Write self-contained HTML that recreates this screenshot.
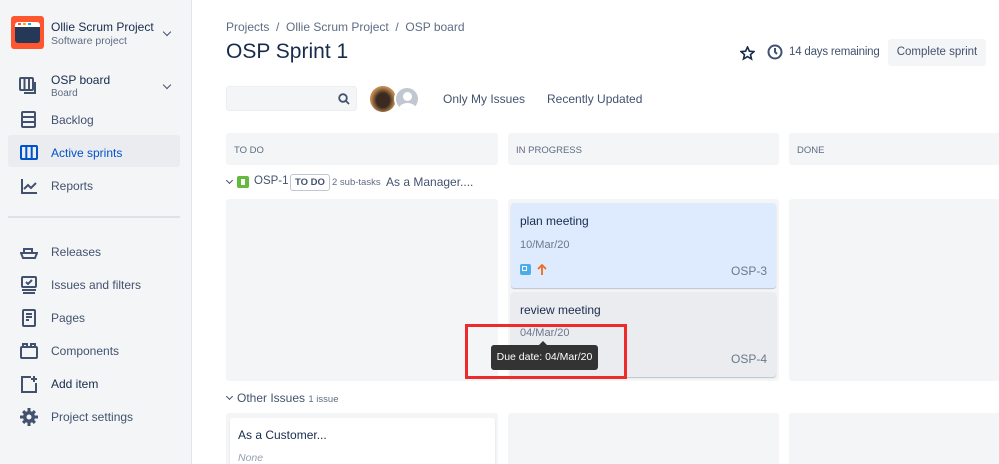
<!DOCTYPE html>
<html><head><meta charset="utf-8"><style>
*{margin:0;padding:0;box-sizing:border-box}
html,body{width:999px;height:464px;overflow:hidden}
body{background:#fff;font-family:"Liberation Sans",sans-serif;color:#172b4d;position:relative}
.a{position:absolute}
.side{left:0;top:0;width:192px;height:464px;background:#f4f5f7;border-right:1px solid #e2e4e8}
.nav{left:20px;font-size:12px;color:#42526e}
.nav svg{position:absolute;left:0;top:0}
.nav span{position:absolute;left:31px;top:2px;white-space:nowrap}
.col{background:#f4f5f7;border-radius:3px}
.hd{font-size:9.5px;color:#5e6c84;padding:12px 8px}
.t{white-space:nowrap}
.chev{width:6px;height:6px;border-right:1.8px solid #42526e;border-bottom:1.8px solid #42526e;transform:rotate(45deg)}
</style></head><body>
<div class="a side"></div>
<div class="a" style="left:11px;top:16px;width:33px;height:33px;background:#ff5630;border-radius:3px"></div>
<div class="a" style="left:15px;top:22px;width:25px;height:21px;background:#253858;border-radius:3px"></div>
<div class="a" style="left:15px;top:22px;width:25px;height:5px;background:#fff;border-radius:3px 3px 0 0"></div>
<div class="a" style="left:18px;top:23px;width:3px;height:2px;background:#ff5630"></div>
<div class="a" style="left:23px;top:23px;width:3px;height:2px;background:#ffab00"></div>
<div class="a" style="left:28px;top:23px;width:3px;height:2px;background:#00b8d9"></div>
<div class="a t" style="left:51px;top:20px;font-size:12px;color:#172b4d">Ollie Scrum Project</div>
<div class="a t" style="left:51px;top:35px;font-size:10.5px;color:#5e6c84">Software project</div>
<div class="a chev" style="left:164px;top:29px"></div>
<div class="a chev" style="left:164px;top:82px"></div>
<div class="a" style="left:8px;top:135px;width:172px;height:32px;background:#ebecf0;border-radius:3px"></div>
<div class="a t" style="left:51px;top:73px;font-size:12px;color:#172b4d">OSP board</div>
<div class="a t" style="left:51px;top:88px;font-size:10px;color:#5e6c84">Board</div>
<svg class="a" style="left:19px;top:77px" width="18" height="18" fill="none" stroke="#42526e" stroke-width="2"><rect x="1" y="1" width="13" height="12" rx="1"/><path d="M5.5 1v12M10 1v12M16 5v11H5"/></svg>
<div class="a nav" style="top:111px"><svg width="18" height="18" fill="none" stroke="#42526e" stroke-width="2"><rect x="2" y="1" width="13" height="5" rx="1"/><rect x="2" y="6" width="13" height="5" rx="1"/><rect x="2" y="11" width="13" height="5" rx="1"/></svg><span>Backlog</span></div>
<div class="a nav" style="top:144px;color:#0052cc"><svg width="18" height="18" fill="none" stroke="#0052cc" stroke-width="2"><rect x="1" y="2" width="16" height="13" rx="1"/><path d="M6.3 2v13M11.7 2v13"/></svg><span>Active sprints</span></div>
<div class="a nav" style="top:177px"><svg width="18" height="18" fill="none" stroke="#42526e" stroke-width="2"><path d="M2 2v14h15M4 12l4-4 3 3 5-5"/></svg><span>Reports</span></div>
<div class="a" style="left:8px;top:216px;width:172px;height:2px;background:#dfe1e6"></div>
<div class="a nav" style="top:243px"><svg width="18" height="18" fill="none" stroke="#42526e" stroke-width="2"><path d="M1 10h16l-2 5H3zM4 10V6h8v4"/></svg><span>Releases</span></div>
<div class="a nav" style="top:276px"><svg width="18" height="18" fill="none" stroke="#42526e" stroke-width="2"><rect x="2" y="1" width="14" height="10" rx="1"/><path d="M2 14h14M3 17h12M6 6l2 2 4-4"/></svg><span>Issues and filters</span></div>
<div class="a nav" style="top:309px"><svg width="18" height="18" fill="none" stroke="#42526e" stroke-width="2"><rect x="3" y="1" width="12" height="16" rx="1"/><path d="M6 5h6M6 8h6M6 11h3"/></svg><span>Pages</span></div>
<div class="a nav" style="top:342px"><svg width="18" height="18" fill="none" stroke="#42526e" stroke-width="2"><rect x="1" y="5" width="16" height="11" rx="1"/><path d="M3 5V2h4v3M11 5V2h4v3"/></svg><span>Components</span></div>
<div class="a nav" style="top:375px;color:#172b4d"><svg width="18" height="18" fill="none" stroke="#42526e" stroke-width="2"><path d="M11 2H2v15h14V8M14 1v6M11 4h6"/></svg><span>Add item</span></div>
<div class="a nav" style="top:408px"><svg width="18" height="18" fill="#42526e"><circle cx="9" cy="9" r="6"/><path d="M7.5 0h3v18h-3zM0 7.5h18v3H0z"/><path d="M2 4.2L4.2 2 16 13.8 13.8 16zM13.8 2L16 4.2 4.2 16 2 13.8z"/><circle cx="9" cy="9" r="2.5" fill="#f4f5f7"/></svg><span>Project settings</span></div>

<div class="a t" style="left:226px;top:20px;font-size:12px;color:#5e6c84">Projects &nbsp;/&nbsp; Ollie Scrum Project &nbsp;/&nbsp; OSP board</div>
<div class="a t" style="left:226px;top:40px;font-size:21px;color:#172b4d">OSP Sprint 1</div>
<svg class="a" style="left:740px;top:46px" width="15" height="15" fill="none" stroke="#172b4d" stroke-width="1.6"><path d="M7.5 1l1.9 4.2 4.5.4-3.4 3 1 4.4-4-2.4-4 2.4 1-4.4-3.4-3 4.5-.4z"/></svg>
<svg class="a" style="left:767px;top:44px" width="16" height="16" fill="none" stroke="#42526e" stroke-width="2"><circle cx="8" cy="8" r="6.5"/><path d="M8 4v4l2 2"/></svg>
<div class="a t" style="left:789px;top:46px;font-size:11.5px;color:#42526e;letter-spacing:-0.2px">14 days remaining</div>
<div class="a t" style="left:888px;top:39px;width:98px;height:27px;background:#f4f5f7;border-radius:3px;font-size:11.5px;color:#42526e;text-align:center;line-height:27px">Complete sprint</div>
<div class="a" style="left:226px;top:86px;width:131px;height:25px;background:#f4f5f7;border:1px solid #eceef1;border-radius:3px"></div>
<svg class="a" style="left:338px;top:93px" width="12" height="12" fill="none" stroke="#42526e" stroke-width="1.8"><circle cx="5" cy="5" r="3.8"/><path d="M8 8l3 3"/></svg>
<div class="a" style="left:370px;top:86px;width:26px;height:26px;border-radius:50%;background:radial-gradient(ellipse at 50% 55%,#3a2a20 35%,#c08a50 65%)"></div>
<div class="a" style="left:394px;top:86px;width:26px;height:26px;border-radius:50%;background:#c1c7d0;border:2px solid #fff;overflow:hidden"><div style="position:absolute;left:7px;top:4px;width:9px;height:9px;border-radius:50%;background:#fff"></div><div style="position:absolute;left:3px;top:15px;width:17px;height:12px;border-radius:50%;background:#fff"></div></div>
<div class="a t" style="left:443px;top:92px;font-size:12px;color:#42526e">Only My Issues</div>
<div class="a t" style="left:547px;top:92px;font-size:12px;color:#42526e">Recently Updated</div>

<div class="a col" style="left:226px;top:133px;width:272px;height:32px"><div class="hd">TO DO</div></div>
<div class="a col" style="left:508px;top:133px;width:271px;height:32px"><div class="hd">IN PROGRESS</div></div>
<div class="a col" style="left:789px;top:133px;width:220px;height:32px"><div class="hd">DONE</div></div>

<div class="a chev" style="left:227px;top:178px;width:5px;height:5px"></div>
<div class="a" style="left:237px;top:176px;width:12px;height:12px;background:#63ba3c;border-radius:2px"><div style="position:absolute;left:4px;top:3px;width:4px;height:6px;background:#fff"></div></div>
<div class="a t" style="left:254px;top:175px;font-size:11.5px;color:#42526e">OSP-1</div>
<div class="a t" style="left:290px;top:174px;height:17px;border:1px solid #c1c7d0;border-radius:3px;font-size:9.5px;font-weight:bold;color:#42526e;padding:2px 4px">TO DO</div>
<div class="a t" style="left:332px;top:177px;font-size:9.5px;color:#5e6c84">2 sub-tasks</div>
<div class="a t" style="left:386px;top:175px;font-size:12px;color:#42526e">As a Manager....</div>

<div class="a col" style="left:226px;top:199px;width:272px;height:182px"></div>
<div class="a col" style="left:508px;top:199px;width:271px;height:182px"></div>
<div class="a col" style="left:789px;top:199px;width:220px;height:182px"></div>
<div class="a" style="left:511px;top:203px;width:265px;height:85px;background:#deebff;border-radius:3px;box-shadow:0 1px 1px #b8c2cf"></div>
<div class="a t" style="left:520px;top:214px;font-size:12px">plan meeting</div>
<div class="a t" style="left:520px;top:239px;font-size:11px;color:#6b778c">10/Mar/20</div>
<div class="a" style="left:520px;top:264px;width:11px;height:11px;background:#4bade8;border-radius:2px"><div style="position:absolute;left:2px;top:2px;width:5px;height:5px;border:1px solid #fff"></div></div>
<svg class="a" style="left:537px;top:263px" width="10" height="13" fill="none" stroke="#ef6c1c" stroke-width="1.8"><path d="M5 12V2M1 6l4-4 4 4"/></svg>
<div class="a t" style="left:731px;top:264px;font-size:12px;color:#6b778c">OSP-3</div>
<div class="a" style="left:511px;top:292px;width:265px;height:85px;background:#ebecf0;border-radius:3px;box-shadow:0 1px 1px #b8c2cf"></div>
<div class="a t" style="left:520px;top:303px;font-size:12px">review meeting</div>
<div class="a t" style="left:520px;top:327px;font-size:11px;color:#6b778c">04/Mar/20</div>
<div class="a t" style="left:731px;top:352px;font-size:12px;color:#6b778c">OSP-4</div>
<div class="a" style="left:465px;top:324px;width:162px;height:55px;border:3px solid #ee2a2a"></div>
<div class="a t" style="left:491px;top:345px;width:107px;height:25px;background:#333;border-radius:3px;color:#fff;font-size:10.5px;line-height:25px;text-align:center">Due date: 04/Mar/20</div>
<div class="a" style="left:539px;top:341px;width:0;height:0;border:4px solid transparent;border-bottom-color:#333;border-top:0"></div>

<div class="a chev" style="left:227px;top:394px;width:5px;height:5px"></div>
<div class="a t" style="left:237px;top:391px;font-size:12px;color:#42526e">Other Issues <span style="font-size:9.5px;color:#5e6c84">1 issue</span></div>
<div class="a col" style="left:226px;top:413px;width:272px;height:60px"></div>
<div class="a col" style="left:508px;top:413px;width:271px;height:60px"></div>
<div class="a col" style="left:789px;top:413px;width:220px;height:60px"></div>
<div class="a" style="left:230px;top:418px;width:265px;height:60px;background:#fff;border-radius:3px;box-shadow:0 1px 1px #c1c7d0"></div>
<div class="a t" style="left:238px;top:428px;font-size:12px">As a Customer...</div>
<div class="a t" style="left:238px;top:452px;font-size:10.5px;font-style:italic;color:#97a0af">None</div>
</body></html>
